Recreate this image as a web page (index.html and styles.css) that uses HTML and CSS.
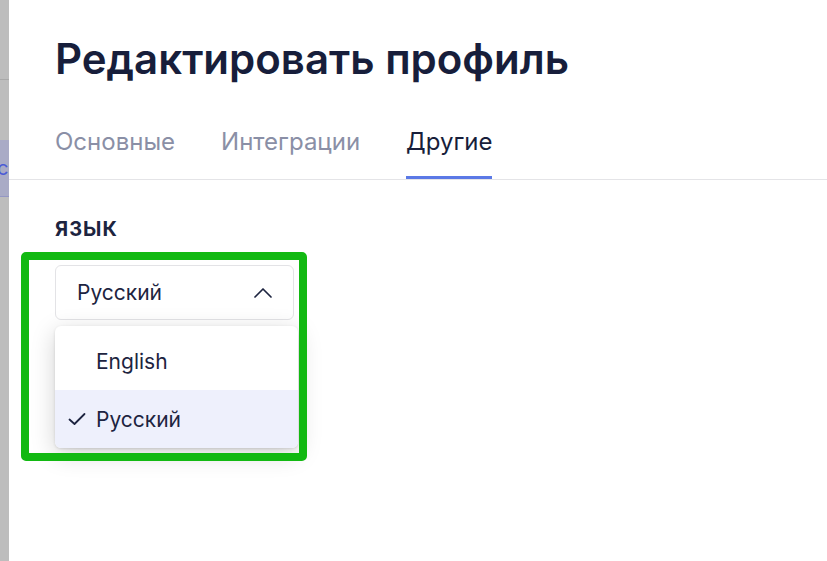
FILE: index.html
```html
<!DOCTYPE html>
<html lang="ru">
<head>
<meta charset="utf-8">
<link rel="stylesheet" href="styles.css">
</head>
<body>
<div class="page">
  <div class="backdrop">
    <div class="backdrop-top"></div>
    <div class="backdrop-item">c</div>
  </div>
  <div class="modal">
    <h1 class="title">Редактировать профиль</h1>
    <nav class="tabs">
      <a class="tab">Основные</a>
      <a class="tab">Интеграции</a>
      <a class="tab tab-active">Другие</a>
    </nav>
    <section class="content">
      <div class="field-label">Язык</div>
      <div class="select-wrap">
        <div class="select">
          <span>Русский</span>
          <svg class="chevron" width="18" height="18" viewBox="0 0 18 18"><path d="M1 13 L9 5 L17 13" fill="none" stroke="#1d2440" stroke-width="1.7" stroke-linecap="round" stroke-linejoin="round"/></svg>
        </div>
        <ul class="menu">
          <li class="menu-item"><span class="check"></span>English</li>
          <li class="menu-item menu-item-selected">
            <span class="check"><svg width="18" height="18" viewBox="0 0 18 18"><path d="M1.5 9.5 L6.5 14 L16.5 4" fill="none" stroke="#1d2440" stroke-width="1.8" stroke-linecap="round" stroke-linejoin="round"/></svg></span>Русский
          </li>
        </ul>
      </div>
    </section>
  </div>
  <div class="highlight"></div>
</div>
</body>
</html>
```

FILE: styles.css
```css
html, body {
  margin: 0;
  padding: 0;
  height: 100%;
}

body {
  font-family: Inter, "Noto Sans", sans-serif;
  color: #1a2140;
  background: #fff;
}

.page {
  position: relative;
  display: flex;
  height: 561px;
  overflow: hidden;
}

.backdrop {
  width: 9px;
  flex-shrink: 0;
  background: #bdbdbd;
}

.backdrop-top {
  height: 79px;
  border-bottom: 1px solid #a9a9a9;
}

.backdrop-item {
  margin-top: 60px;
  height: 56px;
  background: #a9abc6;
  border-bottom: 1px solid #9497c4;
  color: #4a5ad6;
  font-size: 20px;
  line-height: 56px;
  text-indent: -3px;
  overflow: hidden;
}

.modal {
  flex: 1;
  background: #fff;
}

.title {
  margin: 31px 0 0 46px;
  font-size: 42px;
  font-weight: 600;
  line-height: 56px;
  color: #171e3b;
}

.tabs {
  display: flex;
  gap: 46px;
  margin-top: 41px;
  padding-left: 46px;
  border-bottom: 1px solid #e4e4e7;
}

.tab {
  padding-bottom: 20px;
  border-bottom: 3px solid transparent;
  font-size: 24px;
  line-height: 28px;
  color: #8a8fa6;
}

.tab-active {
  color: #171e3b;
  border-bottom-color: #5b79e6;
}

.content {
  padding: 37px 0 0 46px;
}

.field-label {
  font-size: 20px;
  font-weight: 700;
  text-transform: uppercase;
  letter-spacing: 1px;
  line-height: 24px;
  color: #1d2440;
}

.select-wrap {
  position: relative;
  width: 239px;
  margin-top: 24px;
}

.select {
  display: flex;
  align-items: center;
  justify-content: space-between;
  height: 53px;
  padding: 0 21px 0 21px;
  border: 1px solid #e3e3e6;
  border-radius: 6px;
  font-size: 21px;
  color: #1d2440;
}

.chevron {
  display: block;
}

.menu {
  position: absolute;
  top: 61px;
  left: 0;
  width: 243px;
  margin: 0;
  padding: 6px 0 0;
  list-style: none;
  background: #fff;
  border-radius: 6px;
  box-shadow: 0 6px 24px rgba(0, 0, 0, 0.18), 0 1px 3px rgba(0, 0, 0, 0.12);
  overflow: hidden;
}

.menu-item {
  display: flex;
  align-items: center;
  height: 58px;
  padding-left: 13px;
  font-size: 21px;
  color: #1d2440;
}

.menu-item-selected {
  background: #eef0fc;
}

.check {
  display: flex;
  width: 28px;
  height: 18px;
}

.highlight {
  position: absolute;
  left: 21px;
  top: 252px;
  width: 270px;
  height: 193px;
  border: 8px solid #12b912;
  border-radius: 5px;
}
```
